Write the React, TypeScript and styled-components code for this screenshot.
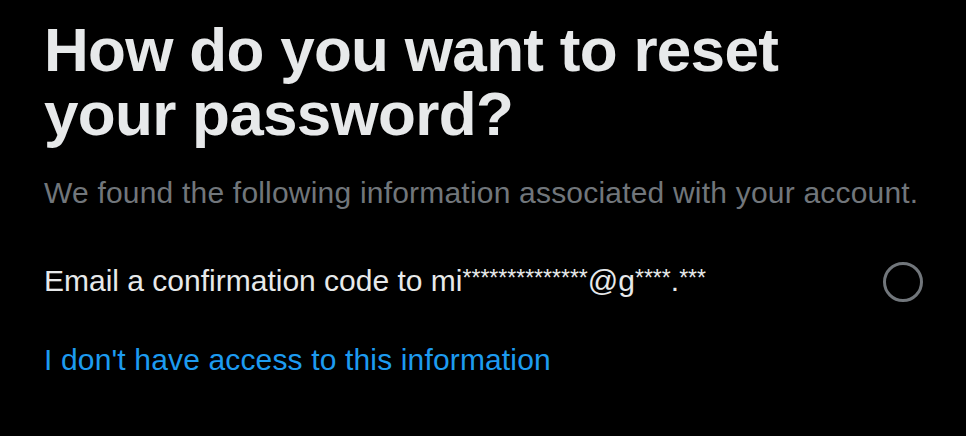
import React from 'react';
import styled, { createGlobalStyle } from 'styled-components';

const TEXT = '#e7e9ea';
const MUTED = '#71767b';
const LINK = '#1d9bf0';

const GlobalStyle = createGlobalStyle`
  html, body {
    margin: 0;
    padding: 0;
    background: #000;
  }
  body {
    font-family: "Liberation Sans", Arial, sans-serif;
    -webkit-font-smoothing: antialiased;
  }
`;

const Page = styled('main')`
  box-sizing: border-box;
  width: 966px;
  height: 436px;
  padding: 18px 43px 0 44px;
  background: #000;
  display: flex;
  flex-direction: column;
`;

const Title = styled('h1')`
  margin: 0;
  max-width: 820px;
  font-size: 62px;
  line-height: 64px;
  font-weight: 700;
  letter-spacing: -0.7px;
  color: ${TEXT};
`;

const Subtitle = styled('p')`
  margin: 27px 0 0;
  font-size: 30px;
  line-height: 40px;
  letter-spacing: 0.2px;
  color: ${MUTED};
`;

const OptionRow = styled('label')`
  margin-top: 44px;
  display: flex;
  align-items: center;
  justify-content: space-between;
  cursor: pointer;
`;

const OptionText = styled('span')`
  font-size: 30px;
  line-height: 40px;
  color: ${TEXT};
`;

const Mask = styled('span')`
  font-size: 23px;
  vertical-align: 5px;
`;

const Radio = styled('span')`
  box-sizing: border-box;
  width: 40px;
  height: 40px;
  margin-top: 5px;
  border: 3.5px solid ${MUTED};
  border-radius: 50%;
  flex-shrink: 0;
`;

const HelpLink = styled('a')`
  margin-top: 38px;
  align-self: flex-start;
  font-size: 30px;
  line-height: 40px;
  letter-spacing: 0.15px;
  color: ${LINK};
  text-decoration: none;
`;

export default function App() {
  return (
    <>
      <GlobalStyle />
      <Page>
        <Title>How do you want to reset your password?</Title>
        <Subtitle>We found the following information associated with your account.</Subtitle>
        <OptionRow>
          <OptionText>
            Email a confirmation code to mi<Mask>**************</Mask>@g<Mask>****</Mask>.<Mask>***</Mask>
          </OptionText>
          <Radio />
        </OptionRow>
        <HelpLink href="#">I don't have access to this information</HelpLink>
      </Page>
    </>
  );
}
